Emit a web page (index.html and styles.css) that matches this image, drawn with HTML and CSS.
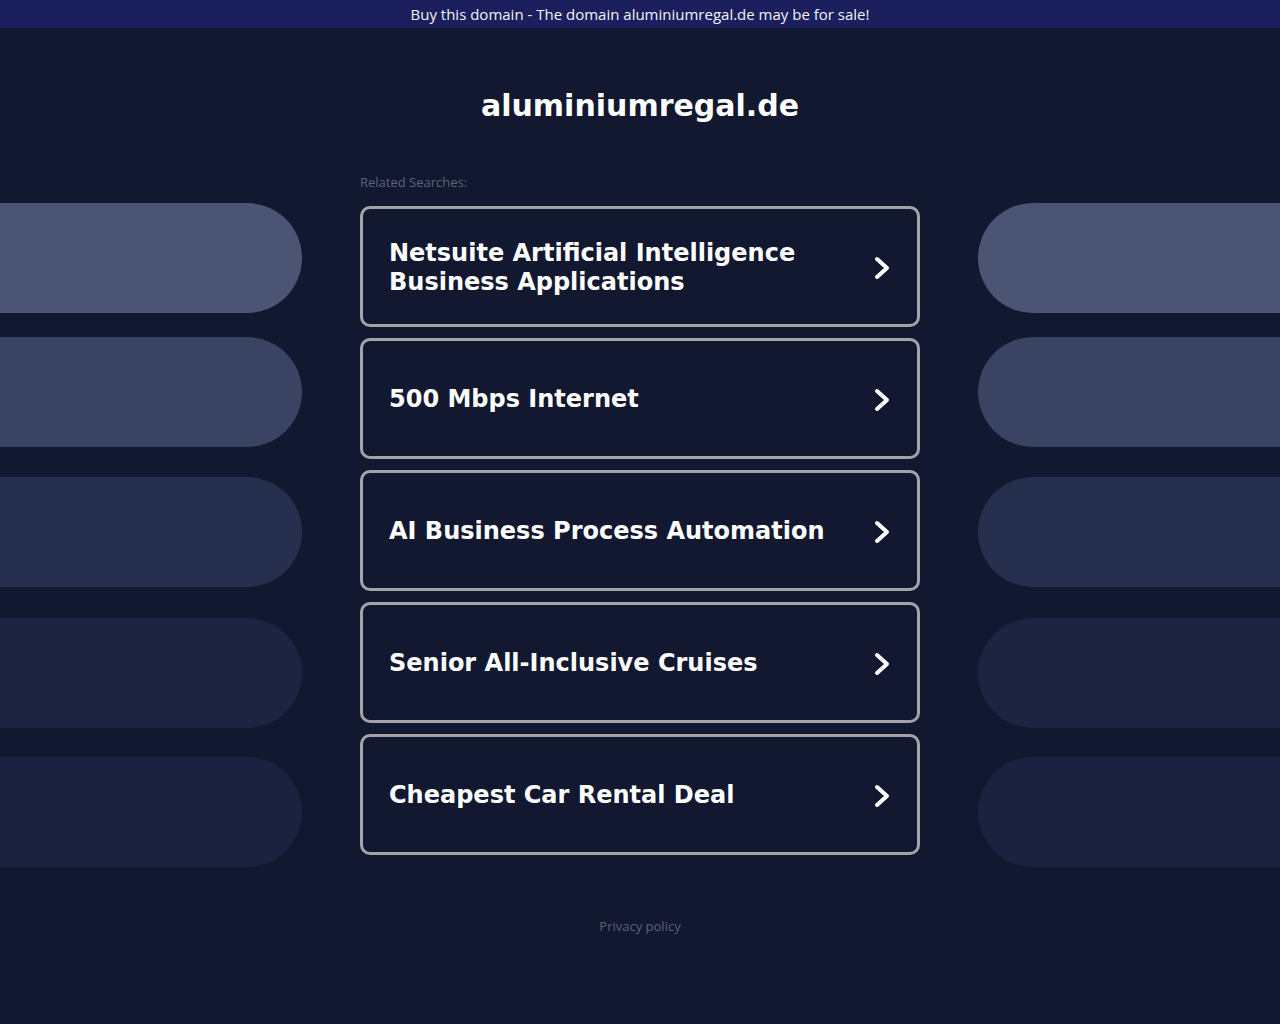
FILE: index.html
```html
<!DOCTYPE html>
<html lang="en">
<head>
<meta charset="utf-8">
<title>aluminiumregal.de</title>
<link rel="stylesheet" href="styles.css">
</head>
<body>
<div class="topbar">Buy this domain - The domain aluminiumregal.de may be for sale!</div>
<header class="header">
  <h1 class="title">aluminiumregal.de</h1>
</header>
<main class="main">
  <div class="side side-left">
    <div class="pill p1"></div>
    <div class="pill p2"></div>
    <div class="pill p3"></div>
    <div class="pill p4"></div>
    <div class="pill p5"></div>
  </div>
  <section class="content">
    <div class="label">Related Searches:</div>
    <div class="cards">
      <a class="card" href="#"><span class="card-text">Netsuite Artificial Intelligence Business Applications</span><svg class="chev" viewBox="0 0 18 26" width="18" height="26"><polyline points="4,4 14,13 4,22"/></svg></a>
      <a class="card" href="#"><span class="card-text">500 Mbps Internet</span><svg class="chev" viewBox="0 0 18 26" width="18" height="26"><polyline points="4,4 14,13 4,22"/></svg></a>
      <a class="card" href="#"><span class="card-text">AI Business Process Automation</span><svg class="chev" viewBox="0 0 18 26" width="18" height="26"><polyline points="4,4 14,13 4,22"/></svg></a>
      <a class="card" href="#"><span class="card-text">Senior All-Inclusive Cruises</span><svg class="chev" viewBox="0 0 18 26" width="18" height="26"><polyline points="4,4 14,13 4,22"/></svg></a>
      <a class="card" href="#"><span class="card-text">Cheapest Car Rental Deal</span><svg class="chev" viewBox="0 0 18 26" width="18" height="26"><polyline points="4,4 14,13 4,22"/></svg></a>
    </div>
  </section>
  <div class="side side-right">
    <div class="pill p1"></div>
    <div class="pill p2"></div>
    <div class="pill p3"></div>
    <div class="pill p4"></div>
    <div class="pill p5"></div>
  </div>
</main>
<footer class="footer"><a class="privacy" href="#">Privacy policy</a></footer>
</body>
</html>
```
FILE: styles.css
```css
html, body {
  margin: 0;
  padding: 0;
}
body {
  background: #121830;
  color: #ffffff;
  font-family: "DejaVu Sans", sans-serif;
  min-height: 1024px;
}
.topbar {
  height: 28px;
  line-height: 28px;
  background: #1b1f5d;
  color: #f2f2f7;
  text-align: center;
  font-family: "Open Sans", "DejaVu Sans", sans-serif;
  font-size: 15px;
}
.header {
  padding: 60px 0 48px;
  text-align: center;
}
.title {
  margin: 0;
  font-family: "DejaVu Sans", sans-serif;
  font-weight: bold;
  font-size: 30px;
  line-height: 36px;
  color: #ffffff;
}
.main {
  display: grid;
  grid-template-columns: 302px 1fr 302px;
}
.side {
  display: flex;
  flex-direction: column;
  padding-top: 31px;
}
.pill {
  height: 110px;
  background: #4b5573;
}
.side-left .pill { border-radius: 0 55px 55px 0; }
.side-right .pill { border-radius: 55px 0 0 55px; }
.pill.p2 { margin-top: 24px; background: #3a4362; }
.pill.p3 { margin-top: 30px; background: #262f4e; }
.pill.p4 { margin-top: 31px; background: #1c2442; }
.pill.p5 { margin-top: 29px; background: #1a2240; }
.content {
  width: 560px;
  justify-self: center;
}
.label {
  font-family: "Open Sans", "DejaVu Sans", sans-serif;
  font-size: 13px;
  line-height: 20px;
  color: #5d647c;
  margin-bottom: 14px;
}
.cards {
  display: flex;
  flex-direction: column;
  gap: 11px;
}
.card {
  box-sizing: border-box;
  height: 121px;
  border: 3px solid #a3a4a8;
  border-radius: 10px;
  display: flex;
  align-items: center;
  justify-content: space-between;
  padding: 2px 26px 0 26px;
  text-decoration: none;
  color: #ffffff;
  background: #121830;
}
.card-text {
  font-family: "DejaVu Sans", sans-serif;
  font-weight: bold;
  font-size: 24px;
  line-height: 29px;
  max-width: 460px;
}
.chev {
  flex: none;
  fill: none;
  stroke: #ffffff;
  stroke-width: 4;
  stroke-linecap: round;
  stroke-linejoin: round;
}
.footer {
  padding-top: 49px;
  text-align: center;
}
.privacy {
  font-family: "Open Sans", "DejaVu Sans", sans-serif;
  font-size: 13px;
  line-height: 20px;
  color: #5a6079;
  text-decoration: none;
}
```
